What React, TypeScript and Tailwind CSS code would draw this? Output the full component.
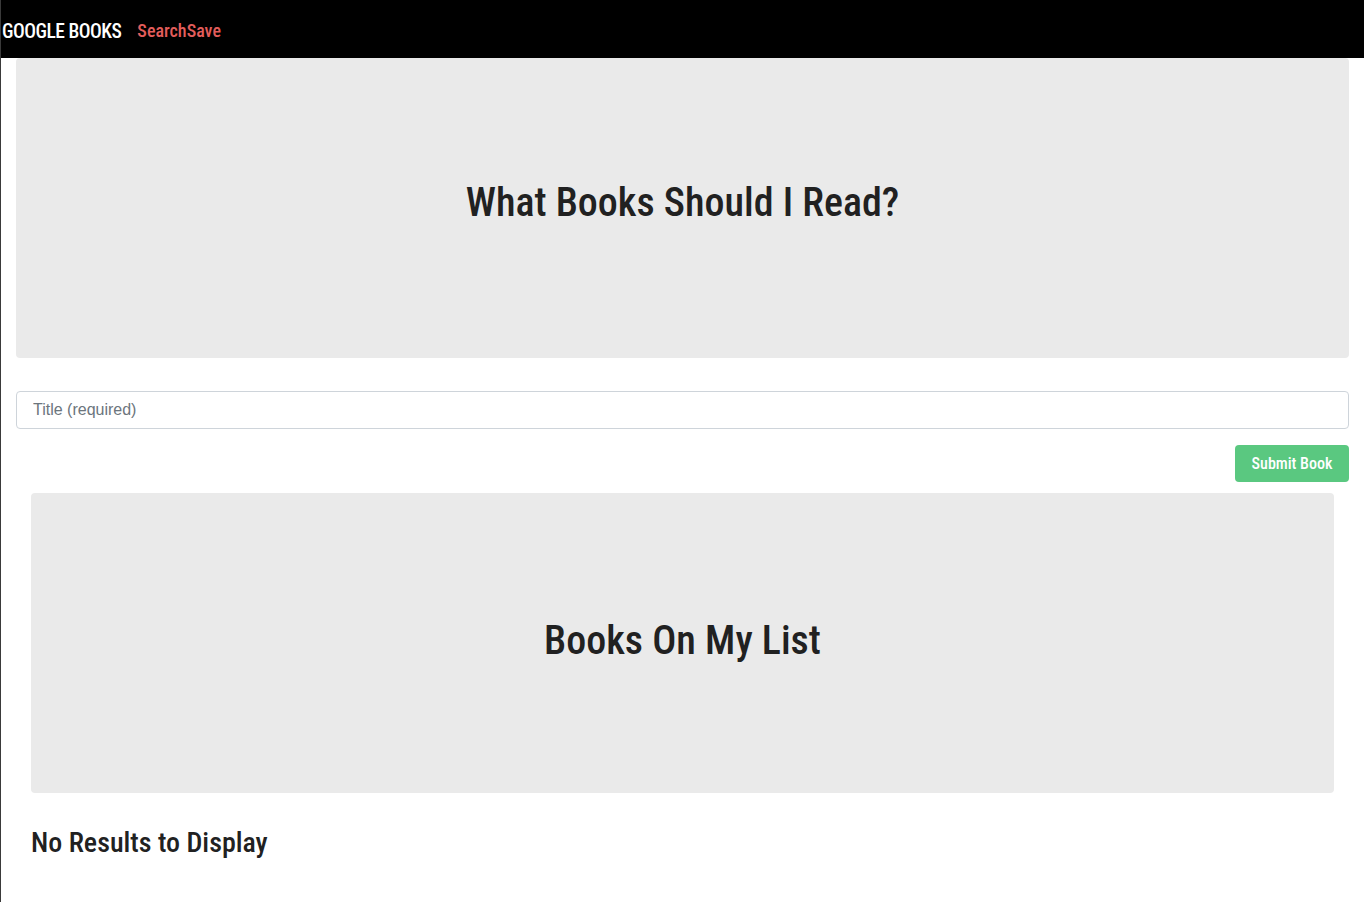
import React, { useState } from "react";

const condensed = "font-['Roboto',sans-serif] font-stretch-condensed";

const Nav = () => {
  return (
    <nav className="bg-black h-[58px] flex items-center gap-4 pl-[1px] pt-[5px]">
      <span className={`${condensed} text-white font-medium text-[19.5px] tracking-tight`}>GOOGLE BOOKS</span>
      <span className={`${condensed} text-[#e35d5b] text-[18px] font-medium -mt-[3px]`}>
        Search<span>Save</span>
      </span>
    </nav>
  );
};

const Jumbotron = ({ children }: { children: React.ReactNode }) => (
  <div className="bg-[#eaeaea] rounded h-[300px] flex items-center justify-center">{children}</div>
);

export default function App() {
  const [title, setTitle] = useState("");

  return (
    <div className="min-h-[902px] bg-white border-l border-[#3a3a3a]">
      <Nav />
      <div className="pl-[15px] pr-[15px]">
        <Jumbotron>
          <h1 className={`${condensed} text-[#212121] font-medium text-[40px] -mt-[10px]`}>
            What Books Should I Read?
          </h1>
        </Jumbotron>

        <form className="mt-[33px]" onSubmit={(e) => e.preventDefault()}>
          <input
            value={title}
            onChange={(e) => setTitle(e.target.value)}
            placeholder="Title (required)"
            className="w-full h-[38px] border border-[#ced4da] rounded px-4 font-['Liberation_Sans',sans-serif] text-[16px] text-[#495057] placeholder:text-[#6c757d] outline-none"
          />
          <div className="flex justify-end mt-4">
            <button
              type="submit"
              className={`${condensed} bg-[#5ac880] text-white font-medium text-[16px] rounded w-[114px] h-[37px]`}
            >
              Submit Book
            </button>
          </div>
        </form>

        <div className="px-[15px] mt-[11px]">
          <Jumbotron>
            <h1 className={`${condensed} text-[#212121] font-medium text-[40px] -mt-[4px]`}>Books On My List</h1>
          </Jumbotron>
          <h3 className={`${condensed} text-[#212121] font-medium text-[28px] mt-[29px]`}>No Results to Display</h3>
        </div>
      </div>
    </div>
  );
}
